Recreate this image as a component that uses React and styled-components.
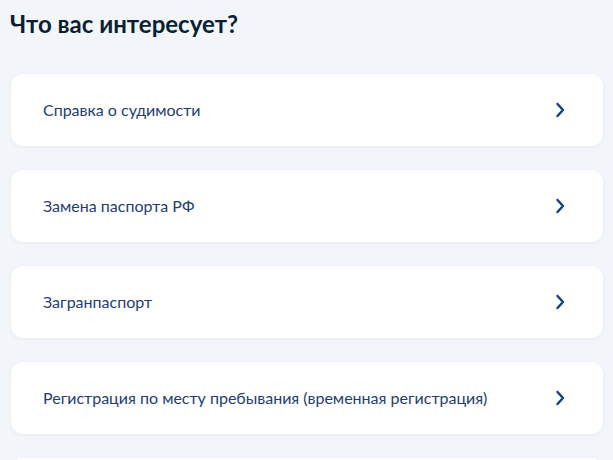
import styled, { createGlobalStyle } from "styled-components";

const GlobalStyle = createGlobalStyle`
  html, body {
    margin: 0;
    padding: 0;
    background: #f2f5fa;
    font-family: Lato, "Noto Sans", sans-serif;
  }
  body {
    height: 460px;
    overflow: hidden;
  }
`;

const Page = styled.main`
  padding: 6px 10px 0 11px;
`;

const Title = styled.h2`
  margin: 0 0 0 -1px;
  font-size: 24px;
  line-height: 36px;
  font-weight: 700;
  color: #0b1f33;
`;

const List = styled.ul`
  list-style: none;
  margin: 32px 0 0;
  padding: 0;
  display: flex;
  flex-direction: column;
  gap: 24px;
`;

const Card = styled.li`
  height: 72px;
  display: flex;
  align-items: center;
  justify-content: space-between;
  padding: 0 38px 0 32px;
  background: #ffffff;
  border-radius: 12px;
  box-shadow: 0 1px 4px rgba(30, 60, 120, 0.06);
  cursor: pointer;
`;

const Label = styled.span`
  font-size: 16px;
  line-height: 24px;
  color: #233d72;
`;

const Chevron = () => (
  <svg width="10" height="16" viewBox="0 0 10 16" fill="none">
    <path
      d="M2.5 2 L8 8 L2.5 14"
      stroke="#1b3f8f"
      strokeWidth="2.5"
      strokeLinecap="round"
      strokeLinejoin="round"
    />
  </svg>
);

const items = [
  "Справка о судимости",
  "Замена паспорта РФ",
  "Загранпаспорт",
  "Регистрация по месту пребывания (временная регистрация)",
];

export default function App() {
  return (
    <>
      <GlobalStyle />
      <Page>
        <Title>Что вас интересует?</Title>
        <List>
          {items.map((item) => (
            <Card key={item}>
              <Label>{item}</Label>
              <Chevron />
            </Card>
          ))}
          {/* next card, only its top edge is in view */}
          <Card aria-hidden="true" />
        </List>
      </Page>
    </>
  );
}
